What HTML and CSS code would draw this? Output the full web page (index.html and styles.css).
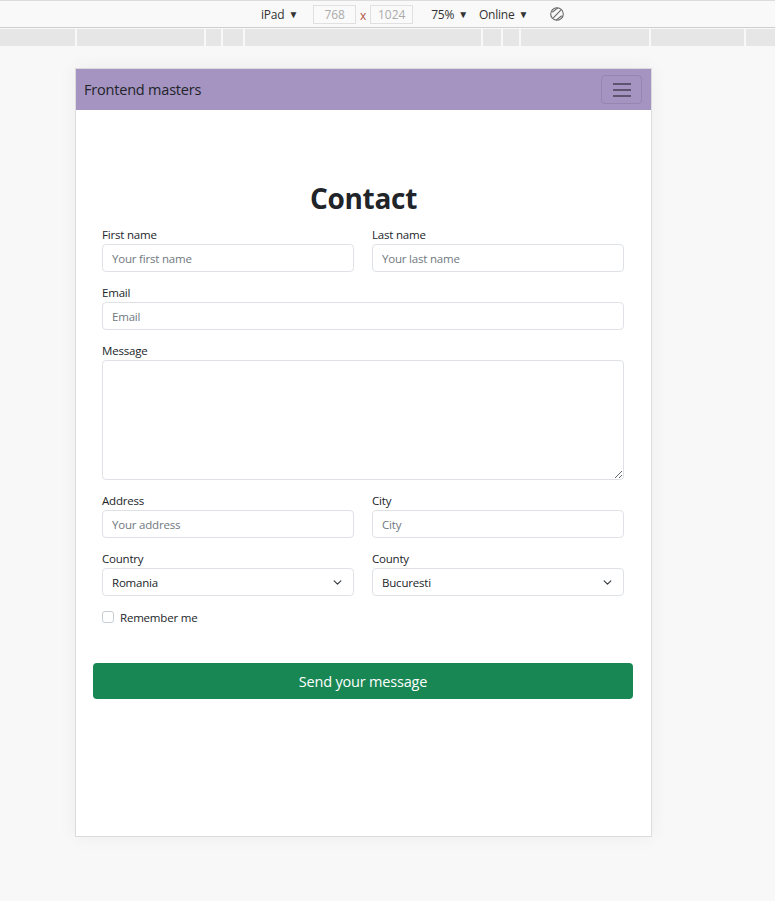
FILE: index.html
```html
<!DOCTYPE html>
<html>
<head>
<meta charset="utf-8">
<link rel="stylesheet" href="styles.css">
</head>
<body>
<div class="toolbar">
  <span class="tb-item tb-device">iPad <span class="caret">▼</span></span>
  <span class="dims">
    <span class="dim-box">768</span>
    <span class="times">x</span>
    <span class="dim-box">1024</span>
  </span>
  <span class="tb-item tb-zoom">75% <span class="caret">▼</span></span>
  <span class="tb-item tb-net">Online <span class="caret">▼</span></span>
  <svg class="rotate" width="16" height="16" viewBox="0 0 16 16">
    <circle cx="8" cy="8" r="6.3" fill="none" stroke="#666" stroke-width="1.1"/>
    <line x1="3.3" y1="6.2" x2="8.8" y2="1.9" stroke="#666" stroke-width="1.1"/>
    <line x1="7.2" y1="14.1" x2="12.7" y2="9.8" stroke="#666" stroke-width="1.1"/>
    <line x1="4.3" y1="11.8" x2="11.8" y2="4.2" stroke="#666" stroke-width="1.1"/>
  </svg>
</div>
<div class="ruler">
  <span class="seg" style="width:75px"></span>
  <span class="seg" style="width:127px"></span>
  <span class="seg" style="width:15px"></span>
  <span class="seg" style="width:20px"></span>
  <span class="seg" style="width:236px"></span>
  <span class="seg" style="width:18px"></span>
  <span class="seg" style="width:16px"></span>
  <span class="seg" style="width:128px"></span>
  <span class="seg" style="width:93px"></span>
  <span class="seg" style="width:29px"></span>
</div>
<div class="stage">
  <div class="device">
    <nav class="navbar">
      <span class="brand">Frontend masters</span>
      <button class="toggler" type="button"><span class="bar"></span><span class="bar"></span><span class="bar"></span></button>
    </nav>
    <main class="content">
      <h1 class="title">Contact</h1>
      <form class="form">
        <div class="row">
          <div class="field">
            <label class="label">First name</label>
            <input class="control" placeholder="Your first name">
          </div>
          <div class="field">
            <label class="label">Last name</label>
            <input class="control" placeholder="Your last name">
          </div>
        </div>
        <div class="field">
          <label class="label">Email</label>
          <input class="control" placeholder="Email">
        </div>
        <div class="field">
          <label class="label">Message</label>
          <textarea class="control area"></textarea>
        </div>
        <div class="row">
          <div class="field">
            <label class="label">Address</label>
            <input class="control" placeholder="Your address">
          </div>
          <div class="field">
            <label class="label">City</label>
            <input class="control" placeholder="City">
          </div>
        </div>
        <div class="row">
          <div class="field">
            <label class="label">Country</label>
            <div class="control select"><span>Romania</span>
              <svg width="9" height="9" viewBox="0 0 16 16"><path d="M2 5l6 6 6-6" fill="none" stroke="#343a40" stroke-width="2" stroke-linecap="round" stroke-linejoin="round"/></svg>
            </div>
          </div>
          <div class="field">
            <label class="label">County</label>
            <div class="control select"><span>Bucuresti</span>
              <svg width="9" height="9" viewBox="0 0 16 16"><path d="M2 5l6 6 6-6" fill="none" stroke="#343a40" stroke-width="2" stroke-linecap="round" stroke-linejoin="round"/></svg>
            </div>
          </div>
        </div>
        <div class="check">
          <span class="box"></span>
          <span class="check-label">Remember me</span>
        </div>
      </form>
      <button class="send" type="button">Send your message</button>
    </main>
  </div>
</div>
</body>
</html>
```

FILE: styles.css
```css
* { box-sizing: border-box; }
html, body { margin: 0; padding: 0; }
body {
  background: #f8f8f8;
  font-family: "Open Sans", "Noto Sans", sans-serif;
  color: #212529;
  width: 775px;
  height: 901px;
  overflow: hidden;
}
.toolbar {
  height: 28px;
  border-top: 1px solid #dcdcdc;
  border-bottom: 1px solid #cfcfcf;
  background: #f9f9f9;
  display: flex;
  align-items: center;
  padding-left: 261px;
  font-size: 12px;
  color: #333;
}
.tb-item { display: inline-flex; align-items: center; gap: 4px; letter-spacing: -0.2px; }
.caret { font-size: 10px; }
.dims { display: inline-flex; align-items: center; margin-left: 15px; }
.dim-box {
  width: 43px;
  height: 19px;
  border: 1px solid #e0e0e0;
  background: #fafafa;
  color: #aaa;
  display: inline-flex;
  align-items: center;
  justify-content: center;
  font-size: 12px;
}
.times { color: #b0563d; width: 14px; text-align: center; font-size: 12px; margin-top: 3px; }
.tb-zoom { margin-left: 18px; }
.tb-net { margin-left: 11px; }
.rotate { margin-left: 21px; margin-top: -1px; }
.ruler {
  margin-top: 1px;
  height: 17px;
  display: flex;
  gap: 2px;
}
.seg { background: #e6e6e6; height: 17px; flex: none; }
.stage { padding: 22px 0 0 75px; }
.device {
  width: 577px;
  height: 769px;
  background: #fff;
  border: 1px solid #dcdcdc;
  box-shadow: 0 0 18px rgba(0,0,0,0.05);
}
.navbar {
  height: 41px;
  background: #a593c2;
  display: flex;
  align-items: center;
  justify-content: space-between;
  padding: 0 9px 0 8px;
}
.brand { font-size: 14.5px; color: #212529; letter-spacing: -0.2px; }
.toggler {
  width: 41px;
  height: 29px;
  border: 1px solid rgba(0,0,0,0.09);
  border-radius: 4px;
  background: transparent;
  display: flex;
  flex-direction: column;
  align-items: center;
  justify-content: center;
  gap: 4px;
  padding: 0;
}
.bar { width: 18px; height: 2px; background: #5e5470; display: block; }
.content { padding-top: 70px; }
.title {
  margin: 0 0 10px;
  text-align: center;
  font-size: 28px;
  line-height: 36px;
  font-weight: 700;
  letter-spacing: -0.3px;
}
.form { padding: 0 27px 0 26px; display: flex; flex-direction: column; gap: 12px; }
.row { display: grid; grid-template-columns: 1fr 1fr; gap: 18px; }
.field { display: flex; flex-direction: column; }
.label { font-size: 11.5px; line-height: 18px; letter-spacing: -0.2px; }
.control {
  height: 28px;
  border: 1px solid #dee2e6;
  border-radius: 4px;
  padding: 0 9px;
  font-family: inherit;
  font-size: 11.5px;
  color: #212529;
  background: #fff;
  outline: none;
  width: 100%;
  letter-spacing: -0.2px;
}
.control::placeholder { color: #707880; }
.area { height: 120px; resize: vertical; }
.select { display: flex; align-items: center; justify-content: space-between; padding-right: 11px; }
.check { display: flex; align-items: center; gap: 6px; height: 18px; }
.box { width: 12px; height: 12px; border: 1px solid #c8cdd2; border-radius: 3px; }
.check-label { font-size: 11.5px; letter-spacing: -0.2px; }
.send {
  display: block;
  margin: 37px 17px 0;
  width: 540px;
  height: 36px;
  border: 0;
  border-radius: 4px;
  background: #198754;
  color: #fff;
  font-family: inherit;
  font-size: 14.5px;
  letter-spacing: -0.2px;
}
```
